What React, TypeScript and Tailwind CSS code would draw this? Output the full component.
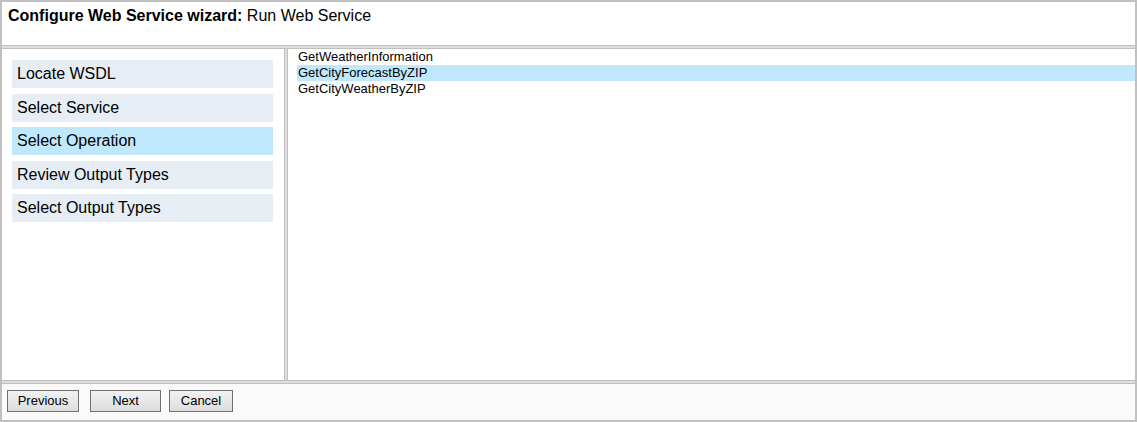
import * as React from 'react';

const STEPS = [
	'Locate WSDL',
	'Select Service',
	'Select Operation',
	'Review Output Types',
	'Select Output Types',
];

const OPERATIONS = ['GetWeatherInformation', 'GetCityForecastByZIP', 'GetCityWeatherByZIP'];

function Divider({ vertical }: { vertical?: boolean }) {
	return vertical ? (
		<div className="w-[4px] shrink-0 border-x border-[#c0c0c0] bg-[#dedede]" />
	) : (
		<div className="h-[4px] shrink-0 border-y border-[#c0c0c0] bg-[#dedede]" />
	);
}

function WizardButton({ label, className }: { label: string; className: string }) {
	return (
		<button
			className={`h-[22px] border border-[#707070] bg-gradient-to-b from-[#f2f2f2] to-[#dddddd] text-[13px] text-black ${className}`}
		>
			{label}
		</button>
	);
}

export default function App() {
	const step = 'Select Operation';
	const [selected, setSelected] = React.useState('GetCityForecastByZIP');

	return (
		<div
			className="flex h-[422px] w-[1137px] flex-col border-2 border-[#c0c0c0] bg-white text-black"
			style={{ fontFamily: '"Liberation Sans", Arial, sans-serif' }}
		>
			<div className="h-[43px] shrink-0 px-[6px] pt-[4px] text-[16px] leading-[20px]">
				<span className="font-bold">Configure Web Service wizard:</span> Run Web Service
			</div>
			<Divider />
			<div className="flex min-h-0 flex-1">
				<div className="w-[282px] shrink-0 pl-[10px] pr-[11px] pt-[11px]">
					<ul className="flex flex-col gap-[5.5px]">
						{STEPS.map((s) => (
							<li
								key={s}
								className={`h-[28px] pl-[5px] text-[16px] leading-[27px] ${
									s === step ? 'bg-[#bfe8fc]' : 'bg-[#e7edf5]'
								}`}
							>
								{s}
							</li>
						))}
					</ul>
				</div>
				<Divider vertical />
				<div className="flex-1 pl-[9px]">
					<ul>
						{OPERATIONS.map((op) => (
							<li
								key={op}
								onClick={() => setSelected(op)}
								className={`h-[16px] pl-[1px] text-[13px] leading-[16px] ${
									op === selected ? 'bg-[#bfe8fc]' : ''
								}`}
							>
								{op}
							</li>
						))}
					</ul>
				</div>
			</div>
			<Divider />
			<div className="flex h-[36px] shrink-0 items-start bg-[#fafafa] pl-[5px] pt-[6px]">
				<WizardButton label="Previous" className="w-[72px]" />
				<WizardButton label="Next" className="ml-[11px] w-[71px]" />
				<WizardButton label="Cancel" className="ml-[8px] w-[64px]" />
			</div>
		</div>
	);
}
